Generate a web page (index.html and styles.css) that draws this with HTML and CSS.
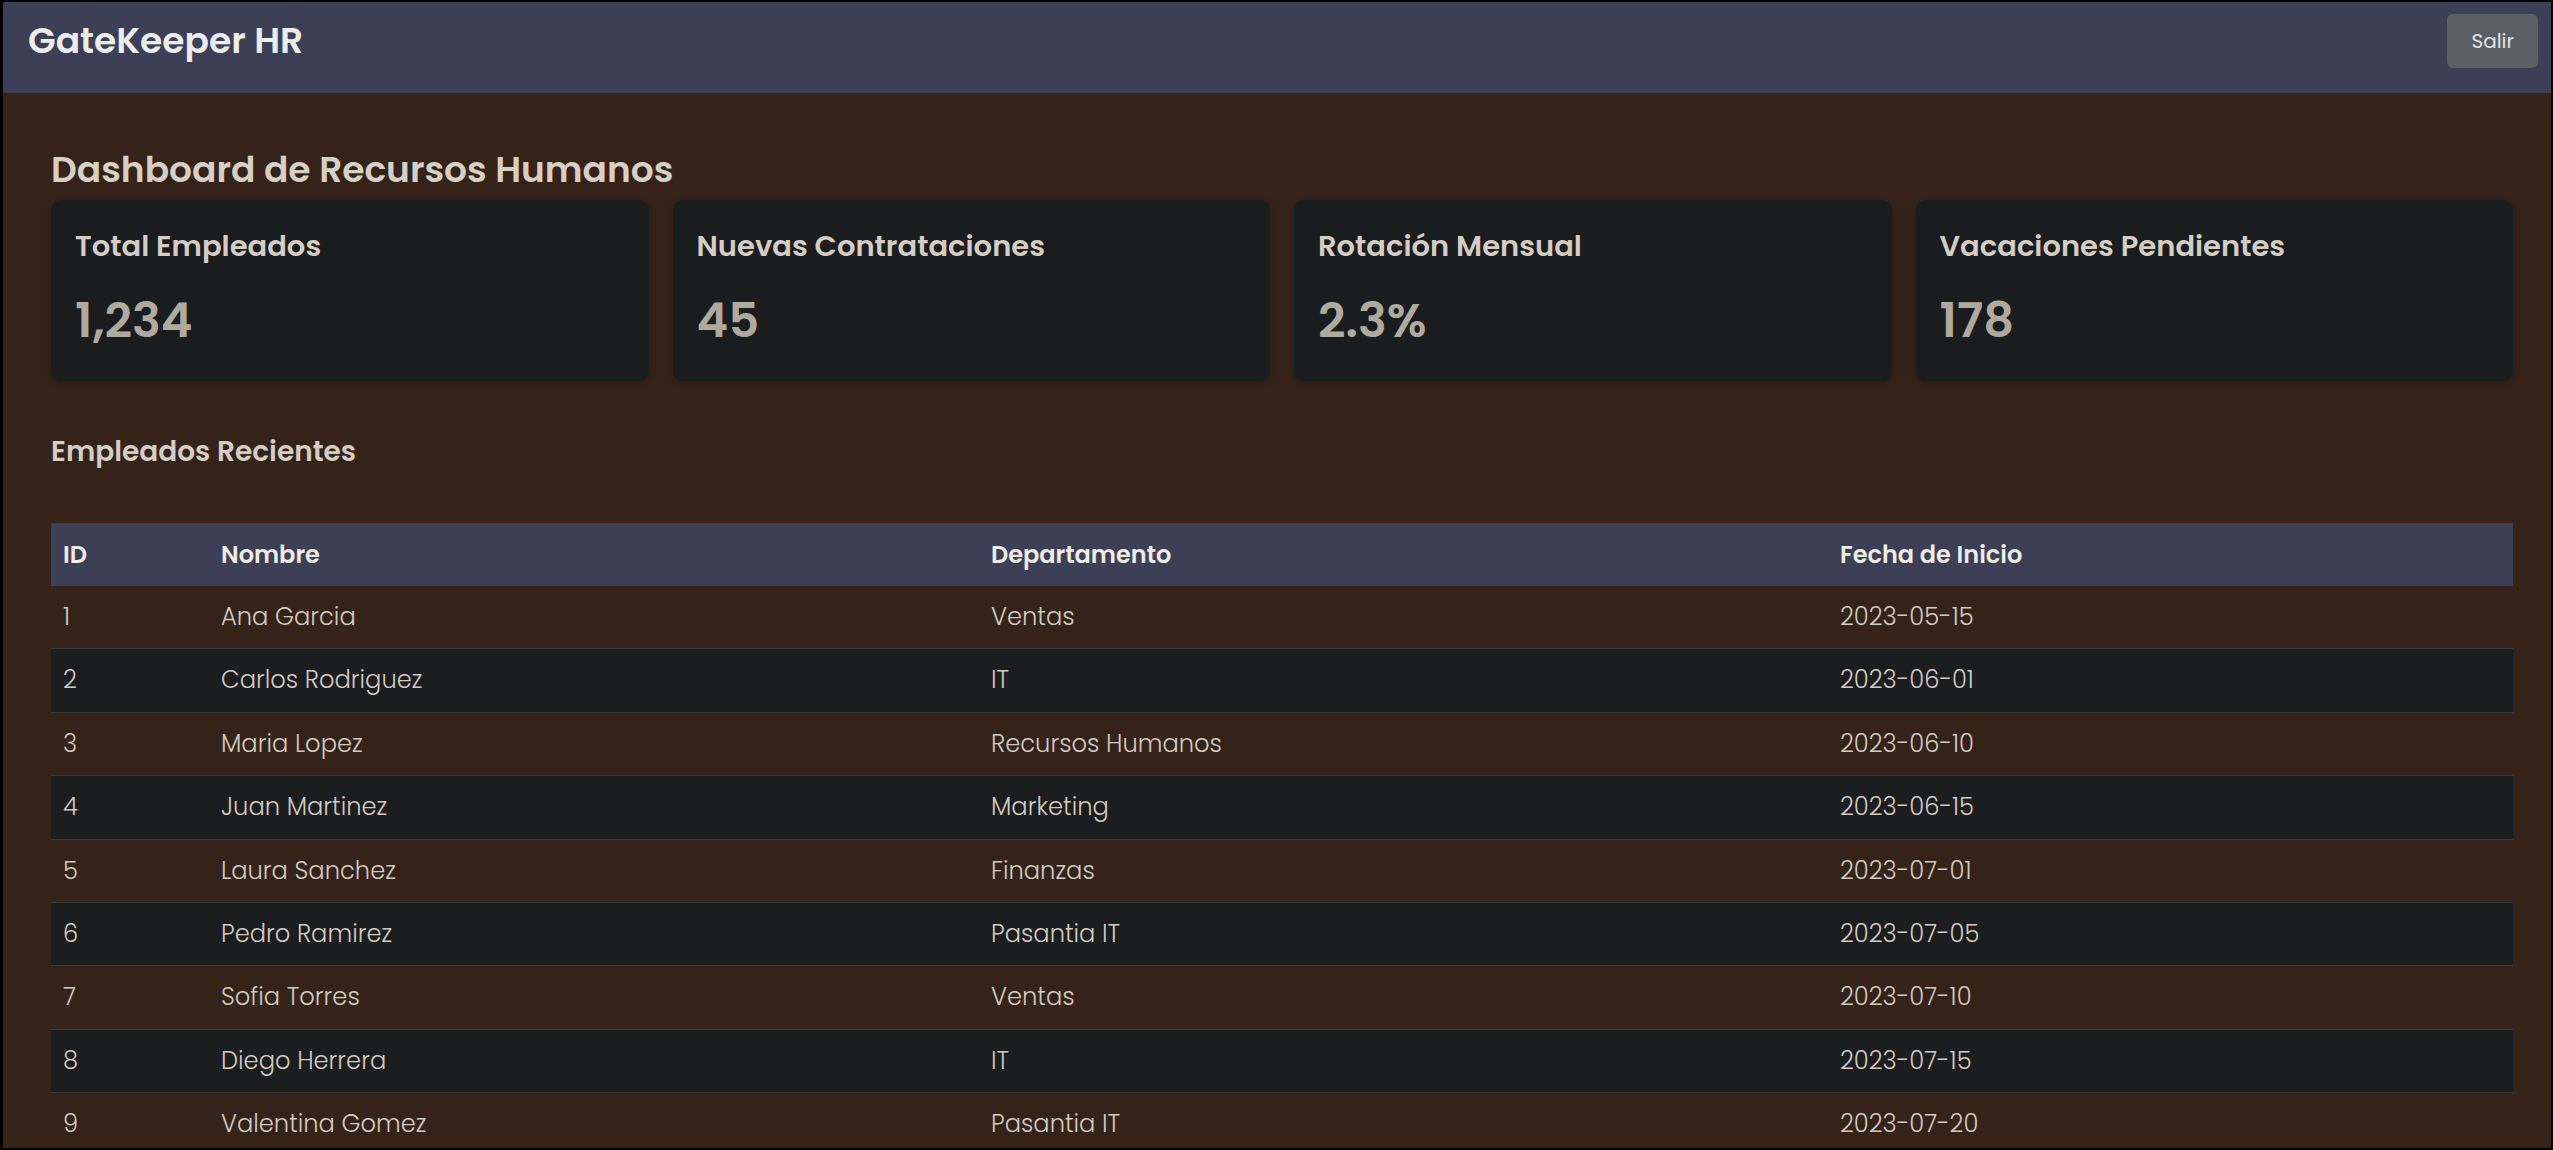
FILE: index.html
```html
<!DOCTYPE html>
<html lang="es">
<head>
    <meta charset="UTF-8">
    <meta name="viewport" content="width=device-width, initial-scale=1.0">
    <title>GateKeeper HR - Dashboard</title>
    <link rel="stylesheet" href="styles.css">
</head>
<body>

    <header class="navbar">
        <h1 class="brand">GateKeeper HR</h1>
        <button class="btn-salir">Salir</button>
    </header>

    <main class="main">
        <h2 class="page-title">Dashboard de Recursos Humanos</h2>

        <div class="stats">
            <div class="card">
                <h3>Total Empleados</h3>
                <p class="value">1,234</p>
            </div>
            <div class="card">
                <h3>Nuevas Contrataciones</h3>
                <p class="value">45</p>
            </div>
            <div class="card">
                <h3>Rotación Mensual</h3>
                <p class="value">2.3%</p>
            </div>
            <div class="card">
                <h3>Vacaciones Pendientes</h3>
                <p class="value">178</p>
            </div>
        </div>

        <h3 class="section-title">Empleados Recientes</h3>

        <table class="tabla">
            <thead>
                <tr>
                    <th class="col-id">ID</th>
                    <th class="col-nombre">Nombre</th>
                    <th class="col-depto">Departamento</th>
                    <th>Fecha de Inicio</th>
                </tr>
            </thead>
            <tbody>
                <tr><td>1</td><td>Ana Garcia</td><td>Ventas</td><td>2023-05-15</td></tr>
                <tr><td>2</td><td>Carlos Rodriguez</td><td>IT</td><td>2023-06-01</td></tr>
                <tr><td>3</td><td>Maria Lopez</td><td>Recursos Humanos</td><td>2023-06-10</td></tr>
                <tr><td>4</td><td>Juan Martinez</td><td>Marketing</td><td>2023-06-15</td></tr>
                <tr><td>5</td><td>Laura Sanchez</td><td>Finanzas</td><td>2023-07-01</td></tr>
                <tr><td>6</td><td>Pedro Ramirez</td><td>Pasantia IT</td><td>2023-07-05</td></tr>
                <tr><td>7</td><td>Sofia Torres</td><td>Ventas</td><td>2023-07-10</td></tr>
                <tr><td>8</td><td>Diego Herrera</td><td>IT</td><td>2023-07-15</td></tr>
                <tr><td>9</td><td>Valentina Gomez</td><td>Pasantia IT</td><td>2023-07-20</td></tr>
            </tbody>
        </table>
    </main>

</body>
</html>
```

FILE: styles.css
```css
html { background: #000; }
body { margin: 0; height: 100vh; box-sizing: border-box; overflow: hidden; border: 2px solid #000; border-left-width: 3px; background: #35231a; color: #d3ccc3; font-family: "Poppins", "Open Sans", sans-serif; }

/* Barra superior */
.navbar { display: flex; justify-content: space-between; align-items: flex-start; height: 91px; box-sizing: border-box; padding: 12px 13px 0 25px; background: #3c3f56; }
.brand { margin: 2px 0 0; font-size: 36px; line-height: 50px; font-weight: 600; color: #ececea; }
.btn-salir { height: 54px; padding: 0 24px; border: none; border-radius: 6px; background: #5a5e65; color: #e4e4e4; font-family: inherit; font-size: 20px; cursor: pointer; }
.btn-salir:hover { background: #6a6e76; }

/* Contenido */
.main { padding: 0 38px 0 48px; }
.page-title { margin: 51px 0 4px; font-size: 36px; line-height: 52px; font-weight: 600; color: #d6cfc6; }

.stats { display: grid; grid-template-columns: repeat(4, 1fr); gap: 24px; }
.card { background: #1b1c1e; border-radius: 10px; padding: 26px 24px 30px; box-shadow: 0 2px 6px rgba(0, 0, 0, 0.25); }
.card h3 { margin: 0 0 25px; font-size: 29px; line-height: 40px; font-weight: 600; color: #d3cdc5; }
.card .value { margin: 0; font-size: 48px; line-height: 60px; font-weight: 600; color: #aeaaa0; }

.section-title { margin: 51px 0 51px; font-size: 28px; line-height: 40px; font-weight: 600; color: #d3cdc5; }

/* Tabla de empleados */
.tabla { width: 100%; border-collapse: separate; border-spacing: 0; }
.tabla th { background: #3c3f56; color: #efebe5; font-size: 24px; font-weight: 600; line-height: 63px; padding: 0 12px; text-align: left; }
.tabla td { font-size: 24.2px; font-weight: 300; line-height: 62.4px; padding: 0 12px; border-bottom: 1px solid #3b3938; color: #d2cbc2; }
.tabla tbody tr:nth-child(even) td { background: #1c1d1f; }
.col-id { width: 134px; }
.col-nombre { width: 746px; }
.col-depto { width: 825px; }
```
